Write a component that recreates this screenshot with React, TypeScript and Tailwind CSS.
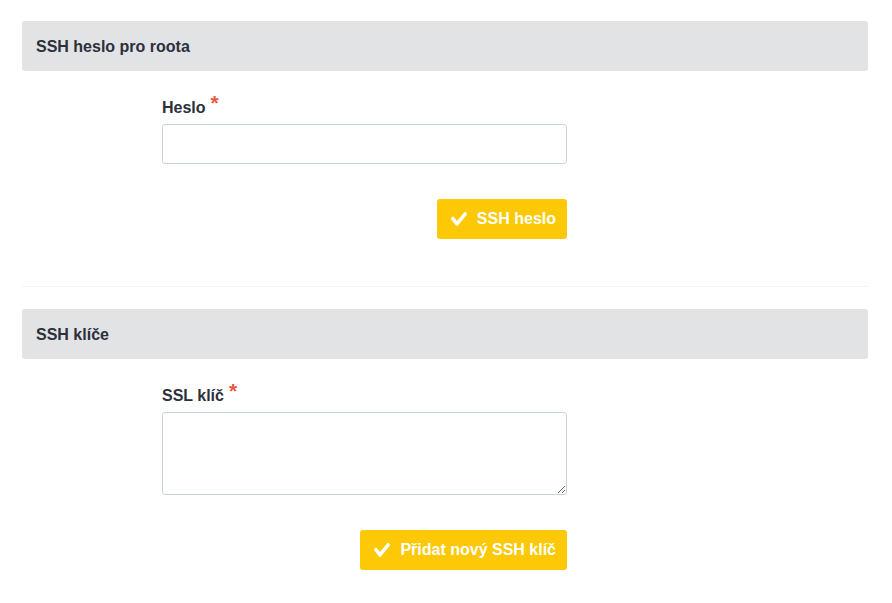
const CheckIcon = () => (
  <svg
    viewBox="0 72 512 370"
    preserveAspectRatio="none"
    className="h-[14px] w-[16px] fill-white"
    aria-hidden="true"
  >
    <path d="M173.9 439.4L7.5 273c-10-10-10-26.2 0-36.2l36.2-36.2c10-10 26.2-10 36.2 0L192 312.7 432.1 72.6c10-10 26.2-10 36.2 0l36.2 36.2c10 10 10 26.2 0 36.2L210.1 439.4c-10 10-26.2 10-36.2 0z" />
  </svg>
);

// Hlavička sekce
const SectionHeader = ({ title }: { title: string }) => (
  <div className="flex h-[50px] items-center rounded-[3px] bg-[#e2e3e5] px-[14px] pt-px text-[16px] font-bold text-[#2b303b]">
    {title}
  </div>
);

const FieldLabel = ({ text }: { text: string }) => (
  <label className="mb-[6px] flex h-[20px] items-center text-[16px] font-bold leading-[20px] text-[#2b303b]">
    {text}
    <span className="relative -top-[6px] ml-[5px] text-[21px] font-bold leading-none text-[#e9573f]">*</span>
  </label>
);

const SubmitButton = ({ text }: { text: string }) => (
  <button
    type="button"
    className="flex h-[40px] items-center gap-[10px] rounded-[3px] bg-[#fdc806] pl-[14px] pr-[11px] text-[16px] font-bold text-white"
  >
    <CheckIcon />
    {text}
  </button>
);

export default function App() {
  return (
    <div
      className="min-h-screen bg-white pl-[22px] pr-[24px] pt-[21px]"
      style={{ fontFamily: '"Liberation Sans", Arial, sans-serif' }}
    >
      {/* SSH heslo */}
      <section>
        <SectionHeader title="SSH heslo pro roota" />
        <div className="ml-[140px] w-[405px] pt-[27px]">
          <FieldLabel text="Heslo" />
          <input
            type="password"
            className="block h-[40px] w-full rounded-[3px] border border-[#c9d2dc] bg-white px-3 outline-none"
          />
          <div className="mt-[35px] flex justify-end">
            <SubmitButton text="SSH heslo" />
          </div>
        </div>
      </section>

      <div className="mt-[47px] h-px bg-[#f3f3f3]" />

      {/* SSH klíče */}
      <section className="mt-[22px]">
        <SectionHeader title="SSH klíče" />
        <div className="ml-[140px] w-[405px] pt-[27px]">
          <FieldLabel text="SSL klíč" />
          <textarea className="block h-[83px] w-full rounded-[3px] border border-[#c9d2dc] bg-white px-3 outline-none" />
          <div className="mt-[35px] flex justify-end">
            <SubmitButton text="Přidat nový SSH klíč" />
          </div>
        </div>
      </section>
    </div>
  );
}
